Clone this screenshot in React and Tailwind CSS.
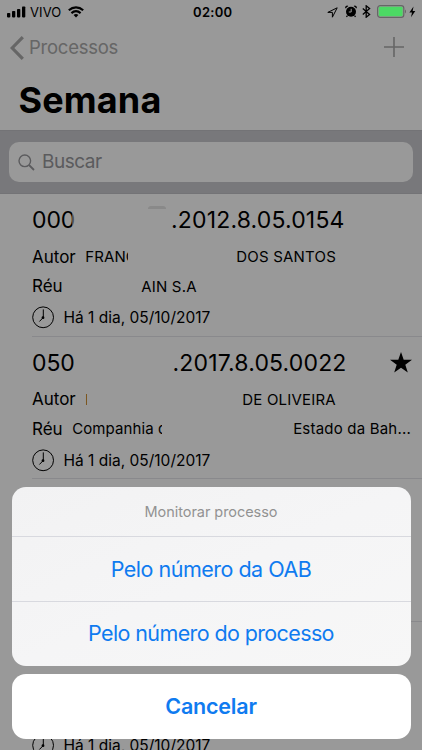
const lawsuits = [
    {
        id: 1,
        number: ["000", ".2012.8.05.0154"],
        numberGap: "ml-[96px]",
        author: ["FRANC", "DOS SANTOS"],
        authorCut: "w-[42.5px]",
        authorGap: "ml-[108.5px]",
        defendant: ["", "AIN S.A"],
        defendantCut: "w-0",
        defendantGap: "ml-[69px]",
        smudged: true,
    },
    {
        id: 2,
        number: ["050", ".2017.8.05.0022"],
        numberGap: "ml-[97.5px]",
        author: ["I", "DE OLIVEIRA"],
        authorCut: "w-[2px]",
        authorGap: "ml-[155px]",
        defendant: ["Companhia d", "Estado da Bah..."],
        defendantCut: "w-[90px]",
        defendantGap: "ml-[131px]",
        starred: true,
    },
    { id: 3 },
    { id: 4 },
];

function ClockIcon() {
    return (
        <svg width="23" height="23" viewBox="0 0 23 23" fill="none" stroke="#000" className="shrink-0">
            <circle cx="11.1" cy="11.3" r="10.4" strokeWidth="1" />
            <path d="M11.3 3.4V11.6" strokeWidth="1" />
            <path d="M11.2 11.6L7.4 15.5" strokeWidth="1" />
            <circle cx="11" cy="11.7" r="1.4" fill="#000" stroke="none" />
        </svg>
    );
}

function StatusBar() {
    return (
        <div className="relative z-20 flex h-6 items-center text-[13px] text-black">
            <svg width="19" height="12" viewBox="0 0 19 12" className="ml-[7px]">
                <rect x="0" y="7" width="3.3" height="4.4" rx="0.8" />
                <rect x="5" y="5" width="3.3" height="6.4" rx="0.8" />
                <rect x="10" y="3" width="3.3" height="8.4" rx="0.8" />
                <rect x="15" y="0.5" width="3.3" height="10.9" rx="0.8" />
            </svg>
            <span className="ml-[4px] w-[38px] pt-px tracking-[0.1px]">VIVO</span>
            <svg width="16" height="12" viewBox="0 0 16 12" fill="none" stroke="#000" strokeWidth="2.1">
                <path d="M0.8 4.2C5 0.4 11 0.4 15.2 4.2" />
                <path d="M3.4 7.1C6.2 4.6 9.8 4.6 12.6 7.1" />
                <path d="M8 11.4L5.6 9C7 7.8 9 7.8 10.4 9Z" fill="#000" stroke="none" />
            </svg>
            <span className="ml-[109px] w-[134px] pt-px font-semibold tracking-[0.3px]">02:00</span>
            <svg width="11" height="11" viewBox="0 0 11 11" fill="none" stroke="#000" strokeWidth="1" strokeLinejoin="round">
                <path d="M10.2 0.8L0.8 5.4H5.4V10.2Z" />
            </svg>
            <svg width="12" height="13" viewBox="0 0 12 13" className="mb-px ml-[7px]">
                <circle cx="6" cy="6.8" r="5" />
                <path d="M0.4 3.4A2 2 0 0 1 3.4 0.9ZM11.6 3.4A2 2 0 0 0 8.6 0.9Z" />
                <path d="M2.4 10.6L1.5 12M9.6 10.6L10.5 12" stroke="#000" strokeWidth="1.2" />
                <path d="M6.2 3.8V7H3.8" stroke="#999" fill="none" />
            </svg>
            <svg width="9" height="13" viewBox="0 0 9 13" fill="none" stroke="#000" strokeWidth="1.3" className="mb-px ml-[5px]">
                <path d="M0.8 3.5L7.6 9.4L4.2 12.2V0.8L7.6 3.6L0.8 9.5" />
            </svg>
            <svg width="31" height="13" viewBox="0 0 31 13" className="mb-px ml-[6px]">
                <rect x="0.6" y="0.6" width="26.2" height="11.8" rx="2.6" fill="none" stroke="#666" strokeWidth="1.2" />
                <rect x="1.8" y="1.7" width="23.8" height="9.6" rx="1.4" fill="#4cd964" />
                <path d="M28 4.5C29.3 5 29.3 8 28 8.5Z" fill="#666" />
            </svg>
            <svg width="7" height="12" viewBox="0 0 7 12" className="ml-[1px]">
                <path d="M4.5 0.5L0.4 6.5H3L2 11.2L6.3 5H3.7Z" />
            </svg>
        </div>
    );
}

function Party({ label, names, cut, gap }) {
    return (
        <div className="flex h-[29.5px] items-center whitespace-nowrap">
            <span className="text-[17px]">{label}</span>
            <span className={`ml-[9.5px] overflow-hidden text-[15px] tracking-[0.1px] ${cut}`}>{names[0]}</span>
            <span className={`text-[15px] tracking-[0.2px] ${gap}`}>{names[1]}</span>
        </div>
    );
}

function Lawsuit({ item }) {
    return (
        <div className="ml-8 h-[142.6px] shrink-0 border-b border-[#e4e4e9] pt-[9px]">
            <div className="relative flex h-[34px] items-center text-[23px] whitespace-nowrap">
                {item.number && (
                    <>
                        <span className="w-[43px] overflow-hidden tracking-[-0.1px]">{item.number[0]}</span>
                        <span className={`tracking-[0.17px] ${item.numberGap}`}>{item.number[1]}</span>
                    </>
                )}
                {item.smudged && (
                    <>
                        <span className="absolute top-[7px] left-[40px] h-5 w-[4px] bg-white/50" />
                        <span className="absolute top-[3px] left-[116px] h-[3px] w-[18px] rounded-t-full bg-[#e4e4e4]" />
                    </>
                )}
                {item.starred && (
                    <svg width="22" height="21" viewBox="0 0 22 21" className="absolute top-[6px] left-[358px]">
                        <path d="M11 0L13.7 7.8H22L15.3 12.7L17.8 20.6L11 15.8L4.2 20.6L6.7 12.7L0 7.8H8.3Z" />
                    </svg>
                )}
            </div>
            <div className="mt-[5px] h-[59px] pt-[0.6px]">
                {item.author && (
                    <>
                        <Party label="Autor" names={item.author} cut={item.authorCut} gap={item.authorGap} />
                        <Party label="Réu" names={item.defendant} cut={item.defendantCut} gap={item.defendantGap} />
                    </>
                )}
            </div>
            <div className="flex h-[33px] items-center text-[15.5px]">
                <ClockIcon />
                <span className="ml-[8.5px]">Há 1 dia, 05/10/2017</span>
            </div>
        </div>
    );
}

function ActionSheet() {
    return (
        <div className="absolute inset-0 z-10 flex flex-col justify-end bg-black/40 px-[11.5px] pb-[11.5px] text-[21.5px] text-[#0f7bf0]">
            <div className="flex h-[178.5px] flex-col overflow-hidden rounded-[14px] bg-linear-to-br from-[#f2f2f3] via-[#f5f5f6] to-[#f7f7f7]">
                <div className="flex h-[50px] items-center justify-center border-b border-[#d8d9df] text-[14.5px] tracking-[-0.05px] text-[#929292]">
                    <span>Monitorar processo</span>
                </div>
                <button className="h-[64.5px] border-b border-[#d8d9df] tracking-[-0.5px]">Pelo número da OAB</button>
                <button className="h-[64px] tracking-[-0.62px]">Pelo número do processo</button>
            </div>
            <button className="mt-[8.5px] h-[64.5px] rounded-[14px] bg-white font-semibold tracking-[-0.2px]">Cancelar</button>
        </div>
    );
}

export default function App() {
    return (
        <div className="relative h-[750px] w-[422px] overflow-hidden bg-white font-['Inter',sans-serif] text-black">
            <StatusBar />
            <div className="flex h-[47px] items-center text-[#aaa]">
                <svg width="14" height="24" viewBox="0 0 14 24" fill="none" stroke="currentColor" strokeWidth="3.2" className="ml-[10px]">
                    <path d="M12.8 1.2L2.2 12L12.8 22.8" />
                </svg>
                <span className="ml-[5px] pt-px text-[18.5px] tracking-[-0.25px]">Processos</span>
                <svg width="20" height="20" viewBox="0 0 20 20" stroke="currentColor" strokeWidth="1.6" className="mr-[18px] mb-px ml-auto">
                    <path d="M10 0V20M0 10H20" />
                </svg>
            </div>
            <h1 className="flex h-[59px] items-center pb-[2px] pl-[18.5px] text-[36px] font-bold tracking-[0.15px]">Semana</h1>
            <div className="h-[64.2px] border-y border-[#c0c0c5] bg-[#c9c9ce] px-[9px] pt-[11px]">
                <div className="flex h-[40px] items-center rounded-[10px] bg-white pl-[9px] text-[#98989c]">
                    <svg width="17" height="17" viewBox="0 0 17 17" fill="none" stroke="currentColor" strokeWidth="1.4">
                        <circle cx="6.8" cy="6.8" r="5.8" />
                        <path d="M11 11L16 16" strokeWidth="1.8" />
                    </svg>
                    <span className="ml-[7px] text-[19px] tracking-[-0.5px]">Buscar</span>
                </div>
            </div>
            {lawsuits.map((item) => (
                <Lawsuit key={item.id} item={item} />
            ))}
            <ActionSheet />
        </div>
    );
}
